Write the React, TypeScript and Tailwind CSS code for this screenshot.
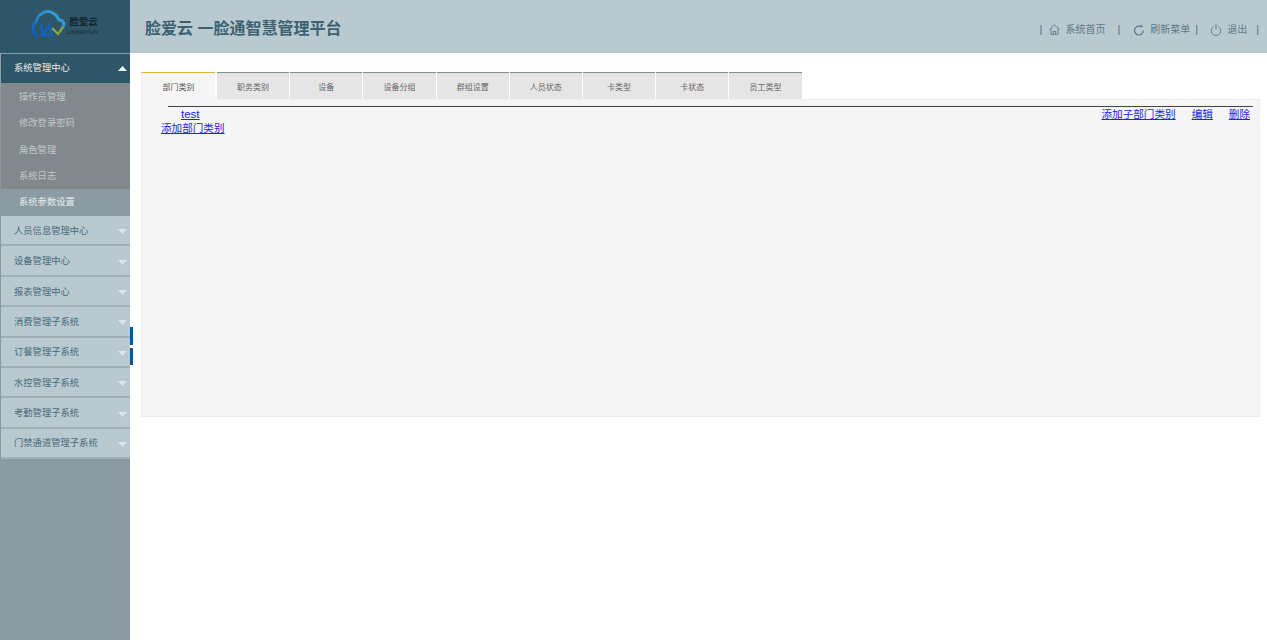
import type { ReactNode } from 'react'

const cjk = "font-['Liberation_Sans','Noto_Sans_CJK_SC',sans-serif]"

const subItems = ['操作员管理', '修改登录密码', '角色管理', '系统日志']
const menus = [
  '人员信息管理中心',
  '设备管理中心',
  '报表管理中心',
  '消费管理子系统',
  '订餐管理子系统',
  '水控管理子系统',
  '考勤管理子系统',
  '门禁通道管理子系统',
]
const tabs = ['部门类别', '职务类别', '设备', '设备分组', '群组设置', '人员状态', '卡类型', '卡状态', '员工类型']

function Caret({ up }: { up?: boolean }) {
  return (
    <svg width="9" height="5" viewBox="0 0 9 5" className="mr-[3px] shrink-0">
      <path d={up ? 'M4.5 0 L9 5 L0 5 Z' : 'M0 0 L9 0 L4.5 5 Z'} fill={up ? '#eef2f4' : '#dfe6e9'} />
    </svg>
  )
}

function Logo() {
  return (
    <div className="flex h-[53px] items-center justify-center bg-[#2e5568]">
      <svg width="34" height="30" viewBox="0 0 34 30" className="mt-[-5px]" fill="none">
        <defs>
          <linearGradient id="cloud" x1="0" y1="1" x2="1" y2="0">
            <stop offset="0" stopColor="#1257b8" />
            <stop offset="1" stopColor="#3bb0dc" />
          </linearGradient>
        </defs>
        <path
          d="M5 27 C0 24 -1 17 4 13 C6 5 14 0 21 4 C24 6 26 8 27 11 C31 11 33 14 31 18"
          stroke="url(#cloud)"
          strokeWidth="3"
          strokeLinecap="round"
        />
        <path d="M9 15 L11 27 L17 16 L20 26 L12 26" stroke="#1560c0" strokeWidth="2.4" strokeLinejoin="round" />
        <path d="M20 19 L26 25 L31 18" stroke="#86a83c" strokeWidth="2.4" />
      </svg>
      <div className="mt-[-1px] flex flex-col items-end">
        <span className="text-[9.5px] leading-[13px] font-bold text-[#14252e]">脸爱云</span>
        <span className="text-[6px] leading-[9px] text-[#14252e]">LIANAIYUN</span>
      </div>
    </div>
  )
}

function Sidebar() {
  return (
    <aside className="relative flex w-[130px] shrink-0 flex-col bg-[#8a9ba2]">
      <Logo />
      <div className="flex h-[30px] items-center justify-between border-t border-l border-[#8aa0ab] bg-[#2e5568] pl-[13px] text-[9.3px] text-[#e8eef0]">
        系统管理中心
        <Caret up />
      </div>
      <div className="ml-px flex flex-col bg-[#81898c] pl-[18px] text-[9.3px] text-[#c2c8ca]">
        {subItems.map((s) => (
          <div key={s} className="flex h-[26.5px] items-center pt-[3px]">
            {s}
          </div>
        ))}
      </div>
      <div className="flex h-[27px] items-center pt-px pl-[19px] text-[9.3px] text-[#e6ebed]">系统参数设置</div>
      {menus.map((m) => (
        <div
          key={m}
          className="ml-px flex h-[30.4px] items-center justify-between border-b-2 border-[#9fb0b8] bg-[#b8c9d0] pt-[3px] pl-[13px] text-[9.3px] text-[#4a6a78]"
        >
          {m}
          <Caret />
        </div>
      ))}
      <div className="absolute top-[327px] left-[130px] flex flex-col gap-[3px]">
        <div className="h-[18px] w-[3px] bg-[#0b5596]" />
        <div className="h-[17px] w-[3px] bg-[#0b5596]" />
      </div>
    </aside>
  )
}

function HeaderLink({ icon, label }: { icon: ReactNode; label: string }) {
  return (
    <span className="flex items-center gap-[5px]">
      {icon}
      {label}
    </span>
  )
}

function Header() {
  const sep = <span className="text-[11px] text-[#4f6c79]">|</span>
  return (
    <header className="flex h-[53px] items-center justify-between bg-[#b8c9d0] pt-[4px] pr-[8px] pl-[15px] text-[#5f7a86]">
      <h1 className="text-[16px] font-bold text-[#3d6170]">脸爱云 一脸通智慧管理平台</h1>
      <div className="mt-[2px] flex items-center text-[10px]">
        {sep}
        <span className="mr-[12px] ml-[7px]">
          <HeaderLink
            label="系统首页"
            icon={
              <svg width="11" height="11" viewBox="0 0 11 11" fill="none" stroke="#5f7a86" strokeWidth="0.9">
                <path d="M0.5 5.5 L5.5 0.8 L10.5 5.5 M2 4.5 V10.3 H9 V4.5 M4.3 10.3 V7.5 H6.7 V10.3" />
              </svg>
            }
          />
        </span>
        {sep}
        <span className="mr-[5px] ml-[13px]">
          <HeaderLink
            label="刷新菜单"
            icon={
              <svg width="12" height="12" viewBox="0 0 12 12" fill="none" stroke="#5f7a86" strokeWidth="1.2">
                <path d="M10.3 6.5 A4.4 4.4 0 1 1 6 2.2 H9" />
                <path d="M7.8 0.4 L10 2.2 L7.8 4" fill="#5f7a86" stroke="none" />
              </svg>
            }
          />
        </span>
        {sep}
        <span className="mr-[9px] ml-[12px]">
          <HeaderLink
            label="退出"
            icon={
              <svg width="12" height="12" viewBox="0 0 12 12" fill="none" stroke="#5f7a86" strokeWidth="0.9">
                <path d="M3.6 2.5 A4.8 4.8 0 1 0 8.4 2.5 M6 0.5 V5.5" />
              </svg>
            }
          />
        </span>
        {sep}
      </div>
    </header>
  )
}

function Tabs() {
  return (
    <div className="flex h-[27px] items-stretch pl-[11px]">
      {tabs.map((t, i) => (
        <div
          key={t}
          className={
            i === 0
              ? 'mr-[2px] flex h-[28px] w-[74px] items-center justify-center border-t border-l border-t-[#e3b04b] border-l-[#eeeeee] bg-[#f5f5f5] pt-[3px] text-[8px] text-[#555555]'
              : 'mr-px flex w-[72.2px] items-center justify-center border-t border-t-[#7f8c90] bg-[#e5e5e5] pt-[4px] text-[8px] text-[#666666]'
          }
        >
          {t}
        </div>
      ))}
    </div>
  )
}

function Panel() {
  const link = 'text-[#2222ee] underline'
  return (
    <div className="mr-[7px] ml-[11px] h-[318px] border border-[#eeeeee] bg-[#f5f5f5] text-[10.6px] leading-[14px]">
      <div className="mt-[6px] mr-[6px] ml-[26px] flex justify-between border-t border-[#444444] pr-[3px] pl-[13px]">
        <a className={`${link} text-[11.5px]`}>test</a>
        <span className="flex gap-[16px]">
          <a className={link}>添加子部门类别</a>
          <a className={link}>编辑</a>
          <a className={link}>删除</a>
        </span>
      </div>
      <div className="pl-[19px]">
        <a className={link}>添加部门类别</a>
      </div>
    </div>
  )
}

export default function App() {
  return (
    <div className={`flex h-[640px] w-[1267px] overflow-hidden bg-white ${cjk}`}>
      <Sidebar />
      <main className="flex min-w-0 flex-1 flex-col">
        <Header />
        <div className="pt-[19px]">
          <Tabs />
          <Panel />
        </div>
      </main>
    </div>
  )
}
